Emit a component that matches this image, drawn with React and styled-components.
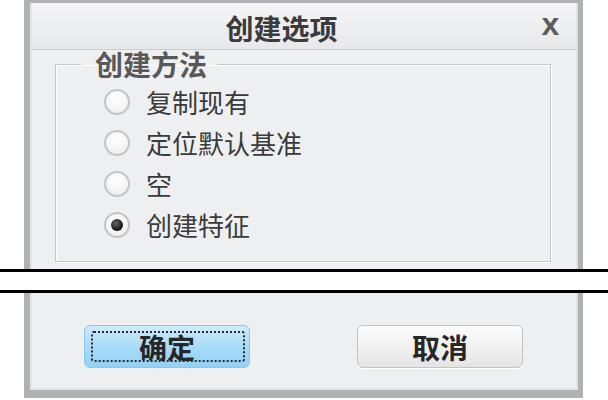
import React from "react";
import styled, { createGlobalStyle, css } from "styled-components";

const Global = createGlobalStyle`
  html, body { margin: 0; padding: 0; background: #ffffff; }
  body { font-family: "Noto Sans CJK SC", "Noto Sans", sans-serif; }
  * { box-sizing: border-box; }
`;

const Page = styled.div`
  width: 608px;
  height: 400px;
  display: flex;
  flex-direction: column;
  overflow: hidden;
`;

const Frame = styled.div`
  margin-left: 24px;
  width: 559px;
  background: #eeeff1;
  border-left: 6px solid #b0b1b3;
  border-right: 5px solid #b0b1b3;
  box-shadow: inset 2px 0 0 #e2e3e5, inset -2px 0 0 #e2e3e5;
  display: flex;
  flex-direction: column;
  overflow: hidden;
  ${(p) =>
    p.$part === "top"
      ? css`
          height: 269px;
          border-top: 3px solid #b0b1b3;
        `
      : css`
          height: 105px;
          border-bottom: 8px solid #b0b1b3;
          box-shadow: inset 2px 0 0 #e2e3e5, inset -2px 0 0 #e2e3e5,
            inset 0 -2px 0 #e2e3e5;
        `}
`;

const TitleBar = styled.div`
  height: 47px;
  margin: 0 2px;
  display: flex;
  align-items: center;
  background: linear-gradient(#f5f5f6, #e7e8ea);
  border-bottom: 1px solid #c9cacc;
`;

const Title = styled.div`
  flex: 1;
  text-align: center;
  font-size: 28px;
  font-weight: 700;
  color: #3b3b3b;
  line-height: 1;
  margin-top: 4px;
`;

const Close = styled.div`
  width: 45px;
  padding-right: 6px;
  text-align: center;
  font-family: "Liberation Sans", Arial, sans-serif;
  font-size: 32px;
  font-weight: 700;
  color: #5c5c5c;
  line-height: 1;
  margin-top: -4px;
`;

const Group = styled.fieldset`
  margin: 0 27px 0 25px;
  padding: 0 0 16px 0;
  border: 1px solid #c6c7c9;
  box-shadow: 1px 1px 0 #ffffff, inset 1px 1px 0 #ffffff;
  min-width: 0;
`;

const Legend = styled.legend`
  margin-left: 25px;
  padding: 0 10px 0 14px;
  font-size: 28px;
  font-weight: 700;
  line-height: 28px;
  color: #585858;
`;

const RadioList = styled.div`
  display: flex;
  flex-direction: column;
  padding-top: 3px;
`;

const RadioRow = styled.label`
  height: 41px;
  display: flex;
  align-items: center;
  padding-left: 48px;
  gap: 16px;
  font-size: 26px;
  color: #3a3a3a;
`;

const RadioCircle = styled.span`
  width: 26px;
  height: 26px;
  border-radius: 50%;
  border: 2px solid #c4c4c4;
  background: radial-gradient(circle at 50% 35%, #ffffff 0%, #f4f4f4 60%, #e6e6e6 100%);
  display: flex;
  align-items: center;
  justify-content: center;
  flex: none;
  &::after {
    content: "";
    width: 12px;
    height: 12px;
    border-radius: 50%;
    background: radial-gradient(circle at 40% 35%, #666 0%, #111 70%);
    display: ${(p) => (p.$checked ? "block" : "none")};
  }
`;

const CutMark = styled.div`
  width: 608px;
  height: 24px;
  border-top: 3px solid #000;
  border-bottom: 3px solid #000;
  background: #ffffff;
  flex: none;
`;

const ButtonRow = styled.div`
  display: flex;
  gap: 107px;
  padding: 32px 0 0 54px;
`;

const Button = styled.button`
  position: relative;
  width: 166px;
  height: 43px;
  border-radius: 6px;
  font-family: "Noto Sans CJK SC", sans-serif;
  font-size: 28px;
  font-weight: 700;
  color: #262626;
  line-height: 1;
  padding: 0;
  ${(p) =>
    p.$primary
      ? css`
          border: 1px solid #86c8f0;
          background: linear-gradient(#cdebfd, #a6daf9 55%, #93d1f7);
          &::after {
            content: "";
            position: absolute;
            inset: 5px 4px 5px 6px;
            border: 2px dotted #2c2c2c;
            border-radius: 3px;
          }
        `
      : css`
          border: 1px solid #c3c3c3;
          background: linear-gradient(#fcfcfc, #f0f0f0 55%, #e4e4e4);
          box-shadow: 0 1px 0 #ffffff;
        `}
`;

const options = [
  { label: "复制现有", checked: false },
  { label: "定位默认基准", checked: false },
  { label: "空", checked: false },
  { label: "创建特征", checked: true },
];

export default function App() {
  return (
    <>
      <Global />
      <Page>
        <Frame $part="top">
          <TitleBar>
            <Title>创建选项</Title>
            <Close>x</Close>
          </TitleBar>
          <Group>
            <Legend>创建方法</Legend>
            <RadioList>
              {options.map((o) => (
                <RadioRow key={o.label}>
                  <RadioCircle $checked={o.checked} />
                  {o.label}
                </RadioRow>
              ))}
            </RadioList>
          </Group>
        </Frame>
        <CutMark />
        <Frame $part="bottom">
          <ButtonRow>
            <Button $primary>确定</Button>
            <Button>取消</Button>
          </ButtonRow>
        </Frame>
      </Page>
    </>
  );
}
